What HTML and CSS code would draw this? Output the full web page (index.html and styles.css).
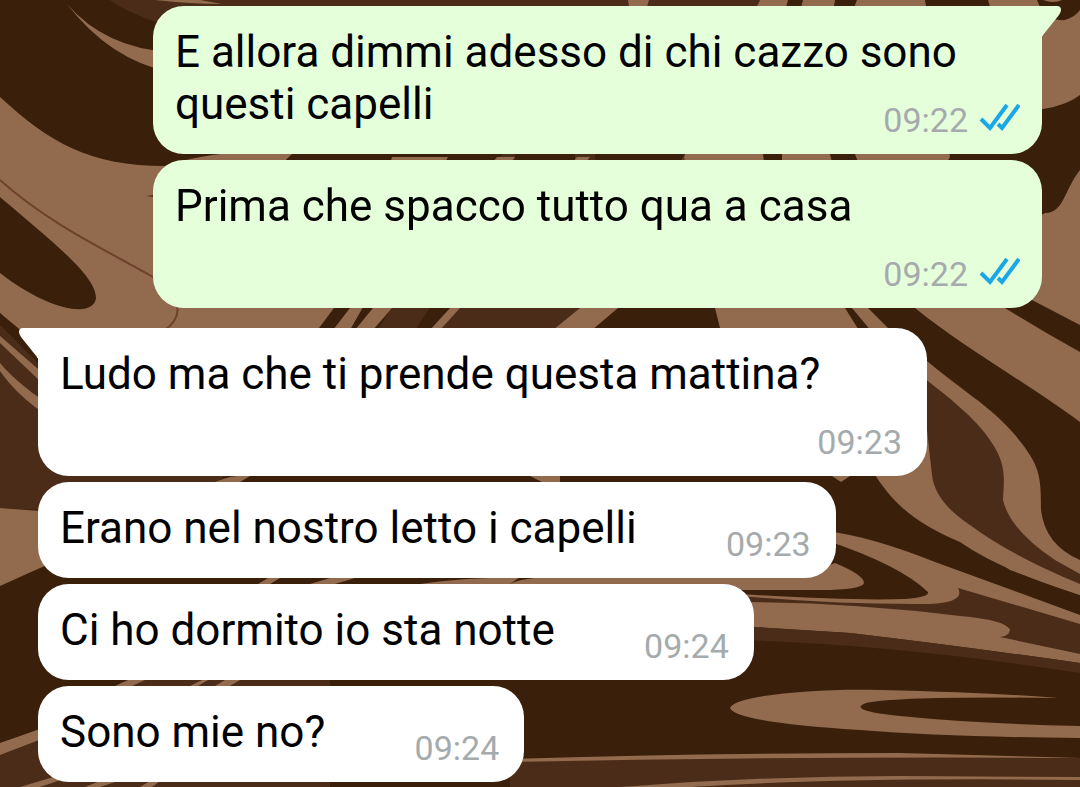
FILE: index.html
```
<!doctype html>
<html lang="it">
<head>
    <meta charset="utf-8">
    <title>Chat</title>
    <meta name="viewport" content="width=device-width, initial-scale=1">
    <link rel="stylesheet" href="styles.css">
</head>

<body>

<!-- marbled wallpaper -->
<svg class="wallpaper" viewBox="0 0 1080 787" preserveAspectRatio="xMidYMid slice" aria-hidden="true">
    <rect class="dark" width="1080" height="787"/>

    <!-- top left -->
    <path class="mid" d="M110 0H628V30H180Q130 15 110 0Z"/>
    <path class="light" d="M155 0Q190 4 222 4L200 0Z"/>
    <path class="light" d="M67 4Q105 48 170 52V72Q110 60 67 4Z"/>
    <path class="light" d="M0 97C50 143 90 166 165 166Q190 157 230 153L292 154Q240 200 320 270L334 308 310 340H0Z"/>
    <path class="dark" d="M0 197C50 240 96 275 96 298C94 318 50 312 0 273Z"/>
    <path class="dark" d="M146 196L175 193V199Z"/>
    <path class="vein" d="M0 180C50 225 110 252 153 277Q195 308 165 330"/>

    <!-- left edge -->
    <path class="mid" d="M0 313Q20 335 60 365V511L0 508Z"/>
    <path class="dark" d="M0 313L18 328 60 365V385L0 325Z"/>
    <path class="light" d="M0 336L60 388V400L0 343Z"/>
    <path class="light" d="M0 363Q18 385 60 412V424Q20 400 0 371Z"/>
    <path class="mid" d="M40 470H230L200 500H40Z"/>
    <path class="light" d="M215 482Q235 474 250 476L240 482Z"/>
    <path class="light" d="M0 508L80 514V552L40 568 0 586Z"/>
    <path class="mid" d="M0 745L60 720 130 680H330V787H0Z"/>
    <path class="light" d="M0 743L60 722V732L0 755Z"/>
    <path class="light" d="M20 787L60 775H75L40 787ZM85 787L100 781H118L100 787ZM140 787L150 781H160L152 787Z"/>
    <path class="light" d="M115 686L128 680H145L132 686ZM190 686L202 680H208L198 686ZM215 686L225 680H240L230 686Z"/>
    <path class="light" d="M258 584L268 578H280L270 584ZM310 584L330 578H355L335 584ZM420 584Q460 578 520 577L510 584Z"/>
    <path class="light" d="M530 476H560V482H542Z"/>

    <!-- middle bands -->
    <path class="mid" d="M649 0H760L690 157 580 308 560 340H370L392 308 500 157Z"/>
    <path class="light" d="M392 157H448L350 330H333L350 308Z"/>
    <path class="light" d="M497 157H515L392 308 373 330H355L373 308Z"/>
    <path class="light" d="M577 157H590L460 308 440 330H428L450 308Z"/>
    <path class="dark" d="M430 308H450L430 330H415ZM595 154H683V162H595ZM515 154H575V162H515Z"/>
    <path class="light" d="M628 0H649L640 30H632Z"/>
    <path class="light" d="M760 0H857 925L950 157 868 300V308L888 328H720L715 308 684 157 618 308 592 330H553L580 308 684 157Z"/>
    <path class="dark" d="M788 0H803L795 30H780ZM835 0H857L845 30H830Z"/>
    <path class="dark" d="M763 154H782V162H764ZM830 154H855L858 162H832Z"/>
    <path class="dark" d="M845 308H852L872 332H860Z"/>

    <!-- right edge -->
    <path class="light" d="M988 0H1037Q1045 22 1065 20 1075 17 1080 10V95Q1060 110 1020 111Z"/>
    <path class="light" d="M1043 0H1062Q1053 4 1043 0Z"/>
    <path class="light" d="M1080 170C1064 190 1064 213 1045 213L900 290 915 308C960 345 1030 385 1080 422Z"/>
    <path class="dark" d="M1000 300H1032L1080 325V352Q1040 330 1005 308Z"/>
    <path class="light" d="M920 355C960 390 990 405 1015 435C1040 465 1041 475 1041 510Q1045 545 1080 560V595Q1000 570 960 542C920 525 895 508 872 470L927 430Z"/>
    <path class="mid" d="M920 375C950 398 975 418 990 440C1007 464 1004 478 1003 500Q1010 530 1055 560L1080 574V584Q1010 555 970 525 935 502 932 475L927 430Z"/>
    <path class="light" d="M832 476H850L841 482Z"/>

    <!-- hooked stripes -->
    <path class="mid" d="M740 594Q830 602 910 604 955 600 956 586L1080 622V660Q1000 640 960 620 850 600 740 604Z"/>
    <path class="light" d="M510 584Q520 578 560 576H800L835 563Q864 575 864 583 862 590 820 590H740Z"/>
    <path class="light" d="M825 531Q870 536 935 562L1080 615V624L958 588Q966 602 930 604 840 605 740 596V594Q850 601 905 599 930 597 928 592 900 565 825 540Z"/>
    <path class="light" d="M740 602Q850 602 960 616 1006 620 1010 630 1009 636 1000 637L1080 654V663Q960 646 850 633L740 626Z"/>
    <path class="light" d="M990 556L1080 588V595L1010 570Z"/>
    <path class="mid" d="M740 626L850 633Q960 646 1080 663V673Q900 645 740 640Z"/>
    <path class="light" d="M730 708C735 695 820 688 880 690Q1000 693 1058 698 900 696 866 703C852 708 866 713 900 716Q980 724 1080 726V738Q950 737 860 730 735 722 730 708Z"/>
    <path class="mid" d="M510 762Q700 755 900 754L1080 758V787H510Z"/>
    <path class="light" d="M510 759Q700 753 900 753L1080 758Q800 756 510 762Z"/>
    <path class="light" d="M620 787Q760 776 900 776L1080 777V780Q850 777 690 787Z"/>
</svg>

<main class="chat">
    <section class="group group-out">
        <div class="bubble">
            <svg class="tail" viewBox="0 0 20 30" aria-hidden="true"><path d="M0 0H15Q19 0 19 4 19 6 17 9L1 29V30H0Z"/></svg>
            <span class="text">E allora dimmi adesso di chi cazzo sono questi capelli</span>
            <span class="meta">
                <time>09:22</time>
                <svg class="ticks" viewBox="0 0 42 40" role="img" aria-label="Letto"><path d="M3 19L12 28 29 5M20 24L24 28 41 5"/></svg>
            </span>
        </div>
        <div class="bubble">
            <span class="text">Prima che spacco tutto qua a casa</span>
            <span class="meta">
                <time>09:22</time>
                <svg class="ticks" viewBox="0 0 42 40" role="img" aria-label="Letto"><path d="M3 19L12 28 29 5M20 24L24 28 41 5"/></svg>
            </span>
        </div>
    </section>

    <section class="group group-in">
        <div class="bubble">
            <svg class="tail" viewBox="0 0 20 30" aria-hidden="true"><path d="M20 0H5Q1 0 1 4 1 6 3 9L19 29V30H20Z"/></svg>
            <span class="text">Ludo ma che ti prende questa mattina?</span>
            <span class="meta"><time>09:23</time></span>
        </div>
        <div class="bubble">
            <span class="text">Erano nel nostro letto i capelli</span>
            <span class="meta"><time>09:23</time></span>
        </div>
        <div class="bubble">
            <span class="text">Ci ho dormito io sta notte</span>
            <span class="meta"><time>09:24</time></span>
        </div>
        <div class="bubble">
            <span class="text">Sono mie no?</span>
            <span class="meta"><time>09:24</time></span>
        </div>
    </section>
</main>

</body>
</html>
```
FILE: styles.css
```
body {
    margin: 0;
    background: #3a200a;
    font-family: Roboto, sans-serif;
    color: #000;
}

/* wallpaper */
.wallpaper {
    position: fixed;
    top: 0;
    left: 0;
    z-index: -1;
    width: 100%;
    height: 100%;
}

.dark {
    fill: #3a200a;
}

.mid {
    fill: #4b2c18;
}

.light {
    fill: #926b4f;
}

.vein {
    fill: none;
    stroke: #6e412a;
    stroke-width: 2;
}

/* messages */
.chat {
    display: flex;
    flex-direction: column;
    gap: 20px;
    padding: 6px 38px 4px;
}

.group {
    display: flex;
    flex-direction: column;
    align-items: flex-start;
    gap: 6px;
}

.group-out {
    align-items: flex-end;
}

.bubble {
    position: relative;
    display: flow-root;
    box-sizing: border-box;
    max-width: calc(100% - 115px);
    padding: 20px 25px 14px 22px;
    border-radius: 31px;
    background: #fff;
    font-size: 44px;
    line-height: 52px;
}

.group-out .bubble {
    padding-right: 22px;
    background: #e5ffdb;
}

.group-out .bubble:first-child {
    border-top-right-radius: 0;
}

.group-in .bubble:first-child {
    border-top-left-radius: 0;
}

.tail {
    position: absolute;
    top: 0;
    width: 20px;
    height: 30px;
}

.group-out .tail {
    left: 100%;
    fill: #e5ffdb;
}

.group-in .tail {
    right: 100%;
    fill: #fff;
}

/* floats next to the last line, or drops below it when there is no room */
.meta {
    float: right;
    display: flex;
    justify-content: flex-end;
    gap: 10px;
    min-width: 174px;
    padding-top: 22px;
    font-size: 34px;
    line-height: 40px;
    color: #a5abad;
}

.ticks {
    width: 42px;
    height: 40px;
    fill: none;
    stroke: #1aa7e6;
    stroke-width: 4;
}
```
